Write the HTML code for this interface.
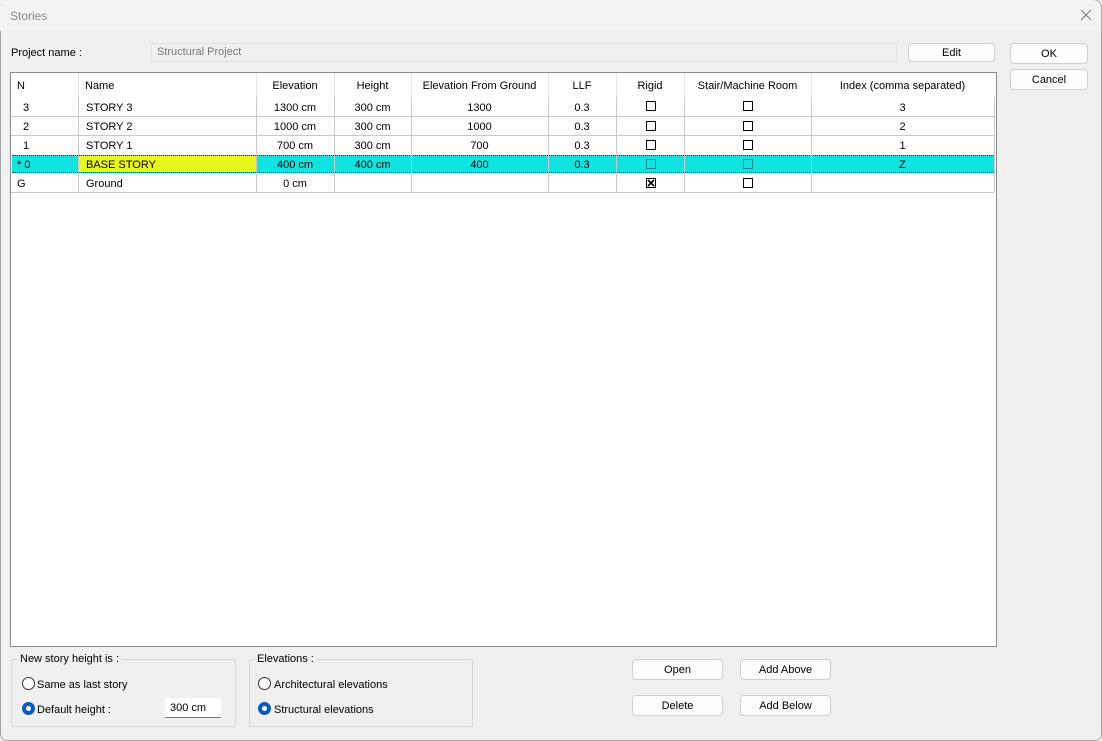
<!DOCTYPE html>
<html><head><meta charset="utf-8"><style>
*{box-sizing:border-box;margin:0;padding:0}
body{width:1102px;height:741px;background:#f0f0f0;font-family:"Liberation Sans",sans-serif;font-size:11px;color:#000;position:relative;overflow:hidden}
.a{position:absolute}
.win{left:0;top:0;width:1102px;height:741px;border:1px solid #a8a8a8;border-radius:7px;background:#f0f0f0}
.title{left:0;top:0;width:1100px;height:31px;background:#f3f3f3;border-radius:7px 7px 0 0}
.btn{position:absolute;background:#fdfdfd;border:1px solid #d0d0d0;border-radius:4px;text-align:center;line-height:18px;font-size:11px}
.cell{position:absolute;height:19px;line-height:19px;white-space:nowrap;padding-top:1px}
.c{text-align:center}
.hl{position:absolute;height:1px;background:#c9c9c9}
.vl{position:absolute;width:1px;background:#c9c9c9}
.cb{position:absolute;width:10px;height:10px;border:1px solid #000;background:#fff}
.fs{position:absolute;border:1px solid #d8d8d8;border-radius:2px}
.leg{position:absolute;background:#f0f0f0;padding:0 2px}
.rad{position:absolute;width:13px;height:13px;border:1px solid #333;border-radius:50%;background:#fff}
.rad.on{background:#fff;border:4px solid #0b5cb8}
</style></head><body>
<div class="a win"></div>
<div class="a title"></div>
<div class="a" style="left:10px;top:9px;color:#888;font-size:12px">Stories</div>
<svg class="a" style="left:1080px;top:9px" width="12" height="12"><path d="M1 1L11 11M11 1L1 11" stroke="#777" stroke-width="1"/></svg>

<div class="a" style="left:11px;top:47px">Project name :</div>
<div class="a" style="left:151px;top:43px;width:746px;height:19px;border:1px solid #e2e2e2;background:#f0f0f0;color:#777;padding-left:5px;line-height:17px">Structural Project</div>
<div class="btn" style="left:908px;top:43px;width:87px;height:19px">Edit</div>
<div class="btn" style="left:1010px;top:43px;width:78px;height:21px;line-height:20px">OK</div>
<div class="btn" style="left:1010px;top:69px;width:78px;height:21px;line-height:20px">Cancel</div>

<div class="a" style="left:10px;top:72px;width:987px;height:575px;border:1px solid #8a8a8a;background:#fff"></div>
<div class="cell" style="left:17px;top:76px">N</div>
<div class="cell" style="left:85px;top:76px">Name</div>
<div class="cell c" style="left:256px;top:76px;width:78px">Elevation</div>
<div class="cell c" style="left:334px;top:76px;width:77px">Height</div>
<div class="cell c" style="left:411px;top:76px;width:137px">Elevation From Ground</div>
<div class="cell c" style="left:548px;top:76px;width:68px">LLF</div>
<div class="cell c" style="left:616px;top:76px;width:68px">Rigid</div>
<div class="cell c" style="left:684px;top:76px;width:127px">Stair/Machine Room</div>
<div class="cell c" style="left:811px;top:76px;width:183px">Index (comma separated)</div>
<div class="vl" style="left:78px;top:73px;height:24px;background:#e6e6e6"></div>
<div class="vl" style="left:256px;top:73px;height:24px;background:#e6e6e6"></div>
<div class="vl" style="left:334px;top:73px;height:24px;background:#e6e6e6"></div>
<div class="vl" style="left:411px;top:73px;height:24px;background:#e6e6e6"></div>
<div class="vl" style="left:548px;top:73px;height:24px;background:#e6e6e6"></div>
<div class="vl" style="left:616px;top:73px;height:24px;background:#e6e6e6"></div>
<div class="vl" style="left:684px;top:73px;height:24px;background:#e6e6e6"></div>
<div class="vl" style="left:811px;top:73px;height:24px;background:#e6e6e6"></div>

<div class="a" style="left:12px;top:155px;width:982px;height:18px;background:#10e3e0;border-top:1px dotted #333;border-bottom:1px dotted #333"></div>
<div class="a" style="left:79px;top:156px;width:177px;height:16px;background:#eaf71a"></div>

<div class="hl" style="left:11px;top:116px;width:983px"></div>
<div class="hl" style="left:11px;top:135px;width:983px"></div>
<div class="hl" style="left:11px;top:192px;width:983px"></div>
<div class="vl" style="left:78px;top:97px;height:95px"></div>
<div class="vl" style="left:256px;top:97px;height:95px"></div>
<div class="vl" style="left:334px;top:97px;height:95px"></div>
<div class="vl" style="left:411px;top:97px;height:95px"></div>
<div class="vl" style="left:548px;top:97px;height:95px"></div>
<div class="vl" style="left:616px;top:97px;height:95px"></div>
<div class="vl" style="left:684px;top:97px;height:95px"></div>
<div class="vl" style="left:811px;top:97px;height:95px"></div>
<div class="vl" style="left:994px;top:97px;height:95px"></div>

<div class="cell" style="left:23px;top:98px">3</div><div class="cell" style="left:86px;top:98px">STORY 3</div>
<div class="cell c" style="left:256px;top:98px;width:78px">1300 cm</div><div class="cell c" style="left:334px;top:98px;width:77px">300 cm</div>
<div class="cell c" style="left:411px;top:98px;width:137px">1300</div><div class="cell c" style="left:548px;top:98px;width:68px">0.3</div>
<div class="cb" style="left:646px;top:101px"></div><div class="cb" style="left:743px;top:101px"></div>
<div class="cell c" style="left:811px;top:98px;width:183px">3</div>

<div class="cell" style="left:23px;top:117px">2</div><div class="cell" style="left:86px;top:117px">STORY 2</div>
<div class="cell c" style="left:256px;top:117px;width:78px">1000 cm</div><div class="cell c" style="left:334px;top:117px;width:77px">300 cm</div>
<div class="cell c" style="left:411px;top:117px;width:137px">1000</div><div class="cell c" style="left:548px;top:117px;width:68px">0.3</div>
<div class="cb" style="left:646px;top:121px"></div><div class="cb" style="left:743px;top:121px"></div>
<div class="cell c" style="left:811px;top:117px;width:183px">2</div>

<div class="cell" style="left:23px;top:136px">1</div><div class="cell" style="left:86px;top:136px">STORY 1</div>
<div class="cell c" style="left:256px;top:136px;width:78px">700 cm</div><div class="cell c" style="left:334px;top:136px;width:77px">300 cm</div>
<div class="cell c" style="left:411px;top:136px;width:137px">700</div><div class="cell c" style="left:548px;top:136px;width:68px">0.3</div>
<div class="cb" style="left:646px;top:140px"></div><div class="cb" style="left:743px;top:140px"></div>
<div class="cell c" style="left:811px;top:136px;width:183px">1</div>

<div class="cell" style="left:17px;top:155px">* 0</div><div class="cell" style="left:86px;top:155px">BASE STORY</div>
<div class="cell c" style="left:256px;top:155px;width:78px">400 cm</div><div class="cell c" style="left:334px;top:155px;width:77px">400 cm</div>
<div class="cell c" style="left:411px;top:155px;width:137px">400</div><div class="cell c" style="left:548px;top:155px;width:68px">0.3</div>
<div class="cb" style="left:646px;top:159px;background:transparent;border-color:#1a8a8a"></div><div class="cb" style="left:743px;top:159px;background:transparent;border-color:#1a8a8a"></div>
<div class="cell c" style="left:811px;top:155px;width:183px">Z</div>

<div class="cell" style="left:17px;top:174px">G</div><div class="cell" style="left:86px;top:174px">Ground</div>
<div class="cell c" style="left:256px;top:174px;width:78px">0 cm</div>
<svg class="a" style="left:646px;top:178px" width="10" height="10"><rect x="0.5" y="0.5" width="9" height="9" fill="#fff" stroke="#000"/><path d="M2 2L8 8M8 2L2 8" stroke="#000" stroke-width="1.6"/></svg>
<div class="cb" style="left:743px;top:178px"></div>

<div class="fs" style="left:11px;top:659px;width:225px;height:68px"></div>
<div class="leg" style="left:18px;top:653px">New story height is :</div>
<div class="rad" style="left:22px;top:677px"></div><div class="a" style="left:37px;top:679px">Same as last story</div>
<div class="rad on" style="left:22px;top:702px"></div><div class="a" style="left:37px;top:704px">Default height :</div>
<div class="a" style="left:165px;top:698px;width:56px;height:20px;background:#fff;border-bottom:1px solid #777;padding-left:5px;line-height:20px">300 cm</div>

<div class="fs" style="left:249px;top:659px;width:224px;height:68px"></div>
<div class="leg" style="left:255px;top:653px">Elevations :</div>
<div class="rad" style="left:258px;top:677px"></div><div class="a" style="left:274px;top:679px">Architectural elevations</div>
<div class="rad on" style="left:258px;top:702px"></div><div class="a" style="left:274px;top:704px">Structural elevations</div>

<div class="btn" style="left:632px;top:659px;width:91px;height:21px;line-height:20px">Open</div>
<div class="btn" style="left:740px;top:659px;width:91px;height:21px;line-height:20px">Add Above</div>
<div class="btn" style="left:632px;top:695px;width:91px;height:21px;line-height:20px">Delete</div>
<div class="btn" style="left:740px;top:695px;width:91px;height:21px;line-height:20px">Add Below</div>
</body></html>
